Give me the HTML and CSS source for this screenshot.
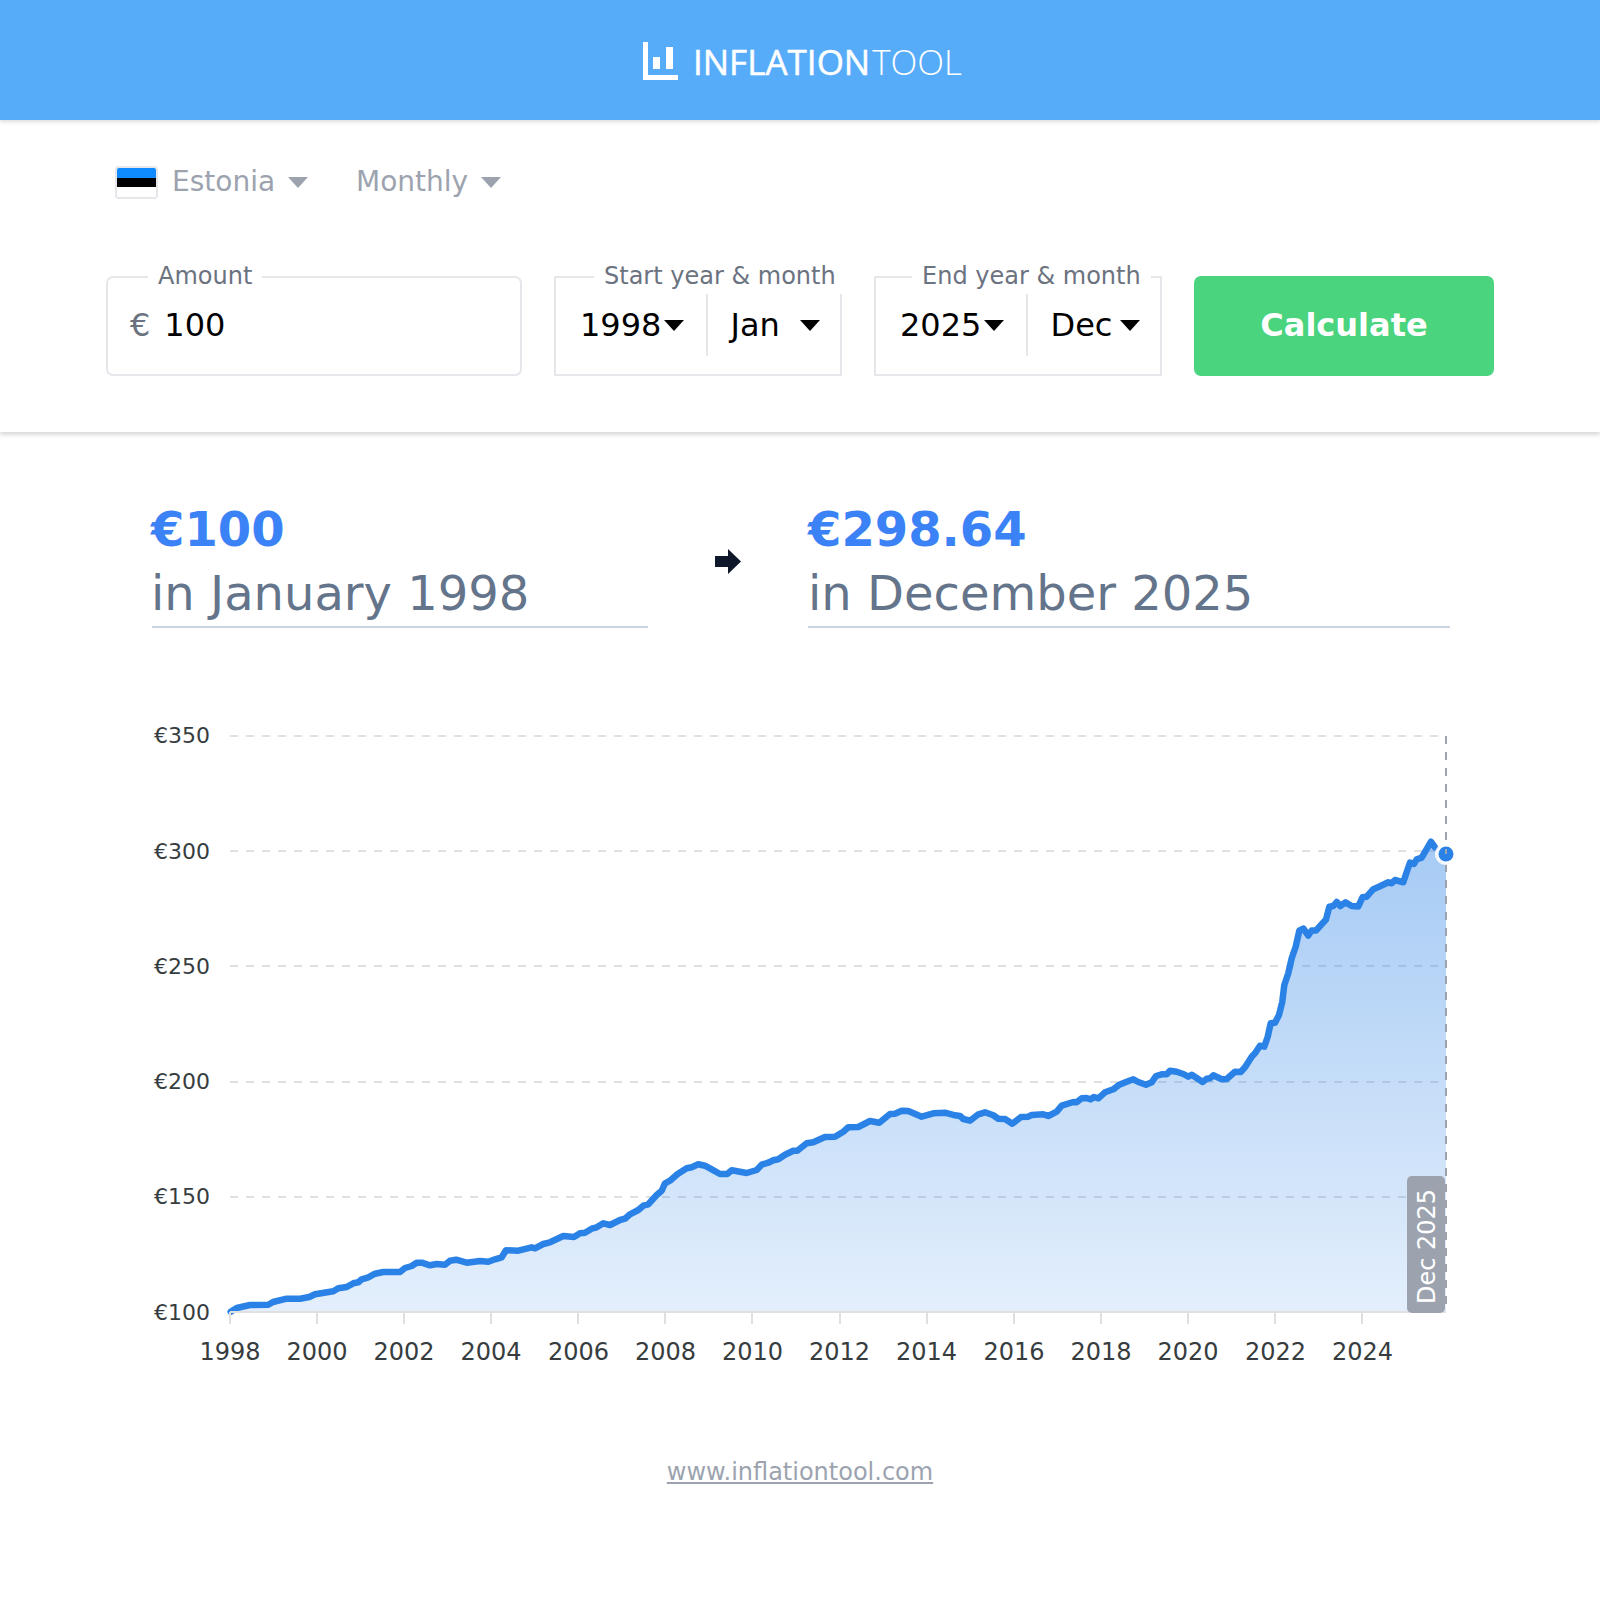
FILE: index.html
```html
<!DOCTYPE html>
<html lang="en">
<head>
<meta charset="utf-8">
<title>Inflation Tool</title>
<link rel="stylesheet" href="styles.css">
</head>
<body>
<header class="topbar">
  <div class="logo">
    <svg class="logo-icon" width="35" height="38" viewBox="0 0 35 38" aria-hidden="true">
      <path d="M0 0H5V33H35V38H0Z" fill="#fff"/>
      <rect x="10" y="15" width="7" height="12" fill="#fff"/>
      <rect x="23" y="5" width="7" height="22" fill="#fff"/>
    </svg>
    <span class="logo-text"><span class="logo-strong">INFLATION</span><span class="logo-light">TOOL</span></span>
  </div>
</header>

<section class="panel">
  <div class="filters">
    <div class="flag"><span class="flag-blue"></span><span class="flag-black"></span><span class="flag-white"></span></div>
    <div class="filter">Estonia<span class="caret caret-muted"></span></div>
    <div class="filter">Monthly<span class="caret caret-muted"></span></div>
  </div>
  <div class="form">
    <div class="field field-amount">
      <span class="field-label">Amount</span>
      <span class="currency">€</span>
      <span class="value">100</span>
    </div>
    <div class="field field-date">
      <span class="field-label field-label-start">Start year &amp; month</span>
      <div class="cell cell-year">1998<span class="caret"></span></div>
      <div class="cell">Jan<span class="caret"></span></div>
    </div>
    <div class="field field-date">
      <span class="field-label field-label-end">End year &amp; month</span>
      <div class="cell cell-year">2025<span class="caret"></span></div>
      <div class="cell">Dec<span class="caret"></span></div>
    </div>
    <button class="calc" type="button">Calculate</button>
  </div>
</section>

<section class="result">
  <div class="result-item result-item-from">
    <div class="result-amount">€100</div>
    <div class="result-date">in January 1998</div>
  </div>
  <svg class="arrow" width="26" height="25" viewBox="0 0 26 25" aria-hidden="true">
    <path d="M0 7H13V0L26 12.5L13 25V18H0Z" fill="#0f172a"/>
  </svg>
  <div class="result-item">
    <div class="result-amount">€298.64</div>
    <div class="result-date">in December 2025</div>
  </div>
</section>

<svg class="chart" width="1600" height="700" viewBox="0 700 1600 700" role="img" aria-label="Value of €100 from 1998 to 2025">
  <defs>
    <linearGradient id="area" gradientUnits="userSpaceOnUse" x1="0" y1="842" x2="0" y2="1312">
      <stop offset="0" stop-color="#2b82e6" stop-opacity=".42"/>
      <stop offset="1" stop-color="#2b82e6" stop-opacity=".13"/>
    </linearGradient>
  </defs>
  <g class="grid">
    <line x1="230" y1="736" x2="1446" y2="736"/>
    <line x1="230" y1="851" x2="1446" y2="851"/>
    <line x1="230" y1="966" x2="1446" y2="966"/>
    <line x1="230" y1="1082" x2="1446" y2="1082"/>
    <line x1="230" y1="1197" x2="1446" y2="1197"/>
  </g>
  <g class="ylabels">
    <text x="210" y="743">€350</text>
    <text x="210" y="859">€300</text>
    <text x="210" y="974">€250</text>
    <text x="210" y="1089">€200</text>
    <text x="210" y="1204">€150</text>
    <text x="210" y="1320">€100</text>
  </g>
  <path class="area" d="M230,1312 L230.7,1311.7 236.7,1308 250,1305 268.3,1304.7 273,1302 286.7,1298.7 300,1298.7 309.3,1297 315,1294.3 333.3,1291.3 338.3,1288.3 346.7,1287 353.3,1283.3 358.3,1282.3 361.7,1279.3 368.3,1277.3 375,1273.7 383.3,1272 400,1272 405,1268 411.7,1266 416.7,1262.7 421.7,1262.7 430,1265.3 436.7,1264 445,1264.7 450,1260.7 456,1259.7 466.7,1262.7 480,1261 488.3,1261.7 495,1259.3 501.7,1257.3 506,1250.3 518.3,1250.7 531.7,1247.3 535,1248.3 543.3,1244 550,1242.3 563.3,1236 574,1237 580,1233.3 585,1232.7 591.7,1228.7 596.7,1227.3 603.3,1223.3 610,1225 620,1220 625,1218.7 630,1214.3 638.3,1210 643.3,1205.7 648.3,1204.3 656.7,1195 661.7,1190.7 665,1183.3 670,1180.7 677.3,1174.3 686.7,1168.3 691.7,1167.3 698.3,1164.3 705,1165.7 711.7,1169.3 720,1174 727.3,1174 731.7,1170.3 746.7,1173 756.7,1170 761.7,1164.7 768.3,1162.7 773.3,1160.3 778.3,1159.3 785,1154.7 793.3,1150.7 797.3,1150.7 806.7,1143.3 813.3,1142.3 825,1137 835,1136.7 843.3,1131.7 848.3,1127.3 858.3,1127 870,1121 879.3,1122.7 890,1114 895,1113.7 901.7,1110.7 908.3,1111 921.7,1116.7 933.3,1113.3 945,1112.7 955,1115.3 960,1116 963.3,1119 970,1120.7 978.3,1114.3 985,1112.3 993.3,1115.3 998.3,1118.7 1005,1119 1012.3,1123.7 1021,1117 1028.3,1116.7 1031.7,1115 1043.3,1114.3 1048.3,1116 1056.7,1111.7 1061.7,1105.7 1073.3,1102 1076.7,1102.3 1081.7,1098.3 1086.7,1098 1090.7,1099.3 1094,1097 1098.3,1098.3 1105,1092.3 1113.3,1089.3 1119.3,1084.7 1126.7,1081.7 1133.3,1079.3 1138.3,1082 1146,1084.7 1151.7,1082.3 1156,1076 1161.7,1074.3 1166.7,1074.3 1170,1070.7 1176.7,1071.7 1183.3,1074 1188.3,1076.7 1191.7,1074.7 1196.7,1078 1202.7,1082 1206.7,1078.7 1210,1078.3 1213.3,1075.3 1221.7,1079.3 1226.7,1079 1235,1071.7 1240.7,1072 1245,1067.3 1251.7,1056.7 1255,1053.3 1260,1045.7 1264.3,1046.7 1267.7,1036.7 1270.7,1023.3 1275,1022.7 1279,1015 1282.3,1001.7 1284.3,985 1288.3,973.3 1291.7,958.3 1295.7,946.7 1299.3,930.7 1303.3,928.5 1308.3,935.5 1311.7,930.5 1316,930.5 1326,919.5 1329.3,906.7 1333.3,906 1336.7,902 1340.3,906 1345.5,902.4 1351.7,906 1358.3,906.4 1362.5,897.3 1366.7,896.7 1373.3,889.2 1380,886.3 1388.3,882.3 1391.7,883.3 1395,880 1403.3,882.3 1406.7,872 1410,862.7 1414,864 1416.7,859.3 1421.7,857.7 1431,841.7 1435,847.3 1446,854.3 L1446,1312 Z"/>
  <line class="crosshair" x1="1446" y1="736" x2="1446" y2="1312"/>
  <polyline class="line" points="230.7,1311.7 236.7,1308 250,1305 268.3,1304.7 273,1302 286.7,1298.7 300,1298.7 309.3,1297 315,1294.3 333.3,1291.3 338.3,1288.3 346.7,1287 353.3,1283.3 358.3,1282.3 361.7,1279.3 368.3,1277.3 375,1273.7 383.3,1272 400,1272 405,1268 411.7,1266 416.7,1262.7 421.7,1262.7 430,1265.3 436.7,1264 445,1264.7 450,1260.7 456,1259.7 466.7,1262.7 480,1261 488.3,1261.7 495,1259.3 501.7,1257.3 506,1250.3 518.3,1250.7 531.7,1247.3 535,1248.3 543.3,1244 550,1242.3 563.3,1236 574,1237 580,1233.3 585,1232.7 591.7,1228.7 596.7,1227.3 603.3,1223.3 610,1225 620,1220 625,1218.7 630,1214.3 638.3,1210 643.3,1205.7 648.3,1204.3 656.7,1195 661.7,1190.7 665,1183.3 670,1180.7 677.3,1174.3 686.7,1168.3 691.7,1167.3 698.3,1164.3 705,1165.7 711.7,1169.3 720,1174 727.3,1174 731.7,1170.3 746.7,1173 756.7,1170 761.7,1164.7 768.3,1162.7 773.3,1160.3 778.3,1159.3 785,1154.7 793.3,1150.7 797.3,1150.7 806.7,1143.3 813.3,1142.3 825,1137 835,1136.7 843.3,1131.7 848.3,1127.3 858.3,1127 870,1121 879.3,1122.7 890,1114 895,1113.7 901.7,1110.7 908.3,1111 921.7,1116.7 933.3,1113.3 945,1112.7 955,1115.3 960,1116 963.3,1119 970,1120.7 978.3,1114.3 985,1112.3 993.3,1115.3 998.3,1118.7 1005,1119 1012.3,1123.7 1021,1117 1028.3,1116.7 1031.7,1115 1043.3,1114.3 1048.3,1116 1056.7,1111.7 1061.7,1105.7 1073.3,1102 1076.7,1102.3 1081.7,1098.3 1086.7,1098 1090.7,1099.3 1094,1097 1098.3,1098.3 1105,1092.3 1113.3,1089.3 1119.3,1084.7 1126.7,1081.7 1133.3,1079.3 1138.3,1082 1146,1084.7 1151.7,1082.3 1156,1076 1161.7,1074.3 1166.7,1074.3 1170,1070.7 1176.7,1071.7 1183.3,1074 1188.3,1076.7 1191.7,1074.7 1196.7,1078 1202.7,1082 1206.7,1078.7 1210,1078.3 1213.3,1075.3 1221.7,1079.3 1226.7,1079 1235,1071.7 1240.7,1072 1245,1067.3 1251.7,1056.7 1255,1053.3 1260,1045.7 1264.3,1046.7 1267.7,1036.7 1270.7,1023.3 1275,1022.7 1279,1015 1282.3,1001.7 1284.3,985 1288.3,973.3 1291.7,958.3 1295.7,946.7 1299.3,930.7 1303.3,928.5 1308.3,935.5 1311.7,930.5 1316,930.5 1326,919.5 1329.3,906.7 1333.3,906 1336.7,902 1340.3,906 1345.5,902.4 1351.7,906 1358.3,906.4 1362.5,897.3 1366.7,896.7 1373.3,889.2 1380,886.3 1388.3,882.3 1391.7,883.3 1395,880 1403.3,882.3 1406.7,872 1410,862.7 1414,864 1416.7,859.3 1421.7,857.7 1431,841.7 1435,847.3"/>
  <circle class="dot-ring" cx="1446" cy="854" r="11"/>
  <circle class="dot" cx="1446" cy="854" r="7.5"/>
  <line class="dot-hair" x1="1446" y1="849" x2="1446" y2="854"/>
  <line class="axis" x1="230" y1="1312" x2="1446" y2="1312"/>
  <g class="ticks">
    <line x1="230" y1="1312" x2="230" y2="1324"/>
    <line x1="317" y1="1312" x2="317" y2="1324"/>
    <line x1="404" y1="1312" x2="404" y2="1324"/>
    <line x1="491" y1="1312" x2="491" y2="1324"/>
    <line x1="578" y1="1312" x2="578" y2="1324"/>
    <line x1="665" y1="1312" x2="665" y2="1324"/>
    <line x1="752" y1="1312" x2="752" y2="1324"/>
    <line x1="840" y1="1312" x2="840" y2="1324"/>
    <line x1="927" y1="1312" x2="927" y2="1324"/>
    <line x1="1014" y1="1312" x2="1014" y2="1324"/>
    <line x1="1101" y1="1312" x2="1101" y2="1324"/>
    <line x1="1188" y1="1312" x2="1188" y2="1324"/>
    <line x1="1275" y1="1312" x2="1275" y2="1324"/>
    <line x1="1362" y1="1312" x2="1362" y2="1324"/>
  </g>
  <g class="xlabels">
    <text x="230" y="1360">1998</text>
    <text x="317" y="1360">2000</text>
    <text x="404" y="1360">2002</text>
    <text x="491" y="1360">2004</text>
    <text x="578.5" y="1360">2006</text>
    <text x="665.5" y="1360">2008</text>
    <text x="752.5" y="1360">2010</text>
    <text x="839.5" y="1360">2012</text>
    <text x="926.5" y="1360">2014</text>
    <text x="1014" y="1360">2016</text>
    <text x="1101" y="1360">2018</text>
    <text x="1188" y="1360">2020</text>
    <text x="1275.5" y="1360">2022</text>
    <text x="1362.5" y="1360">2024</text>
  </g>
  <rect class="date-tag" x="1407" y="1176" width="38" height="137" rx="5"/>
  <text class="date-tag-text" transform="translate(1434.5 1246.5) rotate(-90)">Dec 2025</text>
</svg>

<footer class="footer"><a class="site-link" href="#">www.inflationtool.com</a></footer>
</body>
</html>
```

FILE: styles.css
```css
* { box-sizing: border-box; }

html, body { margin: 0; background: #fff; }

body {
  width: 1600px;
  font-family: "DejaVu Sans", sans-serif;
  color: #000;
}

.topbar {
  height: 120px;
  background: #57acf9;
  box-shadow: 0 2px 4px rgba(0, 0, 0, .14);
  display: flex;
  justify-content: center;
  align-items: flex-start;
  position: relative;
}

.logo {
  display: flex;
  align-items: flex-start;
  gap: 15px;
  padding-top: 42px;
  padding-left: 5px;
  color: #fff;
}

.logo-text {
  font-family: "Open Sans", sans-serif;
  font-size: 35px;
  line-height: 40px;
  display: flex;
}

.logo-strong { font-weight: 400; -webkit-text-stroke: .5px #fff; }
.logo-light { font-weight: 300; margin-left: 2px; }

.panel {
  height: 312px;
  padding: 46px 106px 0;
  box-shadow: 0 3px 4px rgba(0, 0, 0, .15);
}

.filters {
  display: flex;
  align-items: center;
  height: 33px;
  padding-left: 9px;
  font-size: 28px;
  color: #9ca3af;
}

.flag {
  width: 43px;
  height: 33px;
  border: 2px solid #e5e7eb;
  border-radius: 4px;
  overflow: hidden;
  display: flex;
  flex-direction: column;
  margin-right: 14px;
}

.flag span { flex: 1; }
.flag-blue { background: #0f8bff; }
.flag-black { background: #000; }
.flag-white { background: #fff; }

.filter {
  display: flex;
  align-items: center;
  gap: 13px;
  margin-right: 48px;
  line-height: 33px;
  padding-bottom: 2px;
}

.caret {
  width: 0;
  height: 0;
  border-left: 10px solid transparent;
  border-right: 10px solid transparent;
  border-top: 11px solid #000;
}

.caret-muted { border-top-color: #9ca3af; margin-top: 2px; }

.form {
  display: grid;
  grid-template-columns: 416px 288px 288px 300px;
  gap: 32px;
  margin-top: 77px;
  height: 100px;
}

.field {
  position: relative;
  border: 2px solid #e5e7eb;
  font-size: 32px;
}

.field-amount {
  border-radius: 7px;
  display: flex;
  align-items: center;
  padding-left: 22px;
  padding-bottom: 2px;
  gap: 14px;
}

.field-label {
  position: absolute;
  top: -19px;
  left: 40px;
  padding: 0 10px;
  background: #fff;
  font-size: 24px;
  line-height: 35px;
  color: #6b7280;
  white-space: nowrap;
}

.field-label-start { left: 38px; }
.field-label-end { left: 36px; }

.currency { color: #6b7280; }

.field-date {
  display: flex;
  align-items: flex-start;
  padding-top: 16px;
}

.cell {
  height: 62px;
  width: 132px;
  padding: 0 20px 0 22.5px;
  display: flex;
  align-items: center;
  justify-content: space-between;
}

.cell-year {
  width: 152px;
  padding: 0 22px 0 24px;
  border-right: 2px solid #e5e7eb;
}

.calc {
  border: 0;
  border-radius: 7px;
  padding: 0 0 2px;
  background: #4ad47e;
  color: #fff;
  font: 700 32px "DejaVu Sans", sans-serif;
}

.result {
  display: grid;
  grid-template-columns: 496px 160px 642px;
  padding-left: 152px;
  margin-top: 66px;
  align-items: center;
  justify-items: center;
}

.result-item {
  width: 100%;
  border-bottom: 2px solid #cbd5e1;
  height: 130px;
}

.result-item-from > div { margin-left: -1px; }

.result-amount {
  font-size: 48px;
  font-weight: 700;
  line-height: 64px;
  margin-top: -1px;
  color: #3b82f6;
}

.result-date {
  font-size: 48px;
  line-height: 64px;
  color: #64748b;
}

.arrow { margin-bottom: 3px; }

.chart {
  display: block;
  margin-top: 72px;
  font-family: "DejaVu Sans", sans-serif;
}

.grid line {
  stroke: #e0e0e0;
  stroke-width: 2;
  stroke-dasharray: 8 8;
}

.ylabels text {
  font-size: 22px;
  text-anchor: end;
  fill: #373d3f;
}

.xlabels text {
  font-size: 24px;
  text-anchor: middle;
  fill: #373d3f;
}

.area { fill: url(#area); }

.crosshair {
  stroke: #9ca3af;
  stroke-width: 2;
  stroke-dasharray: 8 8;
}

.line {
  fill: none;
  stroke: #2b82e6;
  stroke-width: 6.5;
  stroke-linejoin: round;
  stroke-linecap: round;
}

.dot-ring { fill: #fff; opacity: .85; }
.dot { fill: #2b82e6; }
.dot-hair { stroke: #9ca3af; stroke-width: 2; }

.axis,
.ticks line {
  stroke: #e0e0e0;
  stroke-width: 2;
}

.date-tag { fill: #9ca3af; }

.date-tag-text {
  font-size: 24px;
  text-anchor: middle;
  fill: #fff;
}

.footer {
  margin-top: 54px;
  text-align: center;
  font-size: 24px;
  line-height: 36px;
}

.site-link { color: #9ca3af; }
```
